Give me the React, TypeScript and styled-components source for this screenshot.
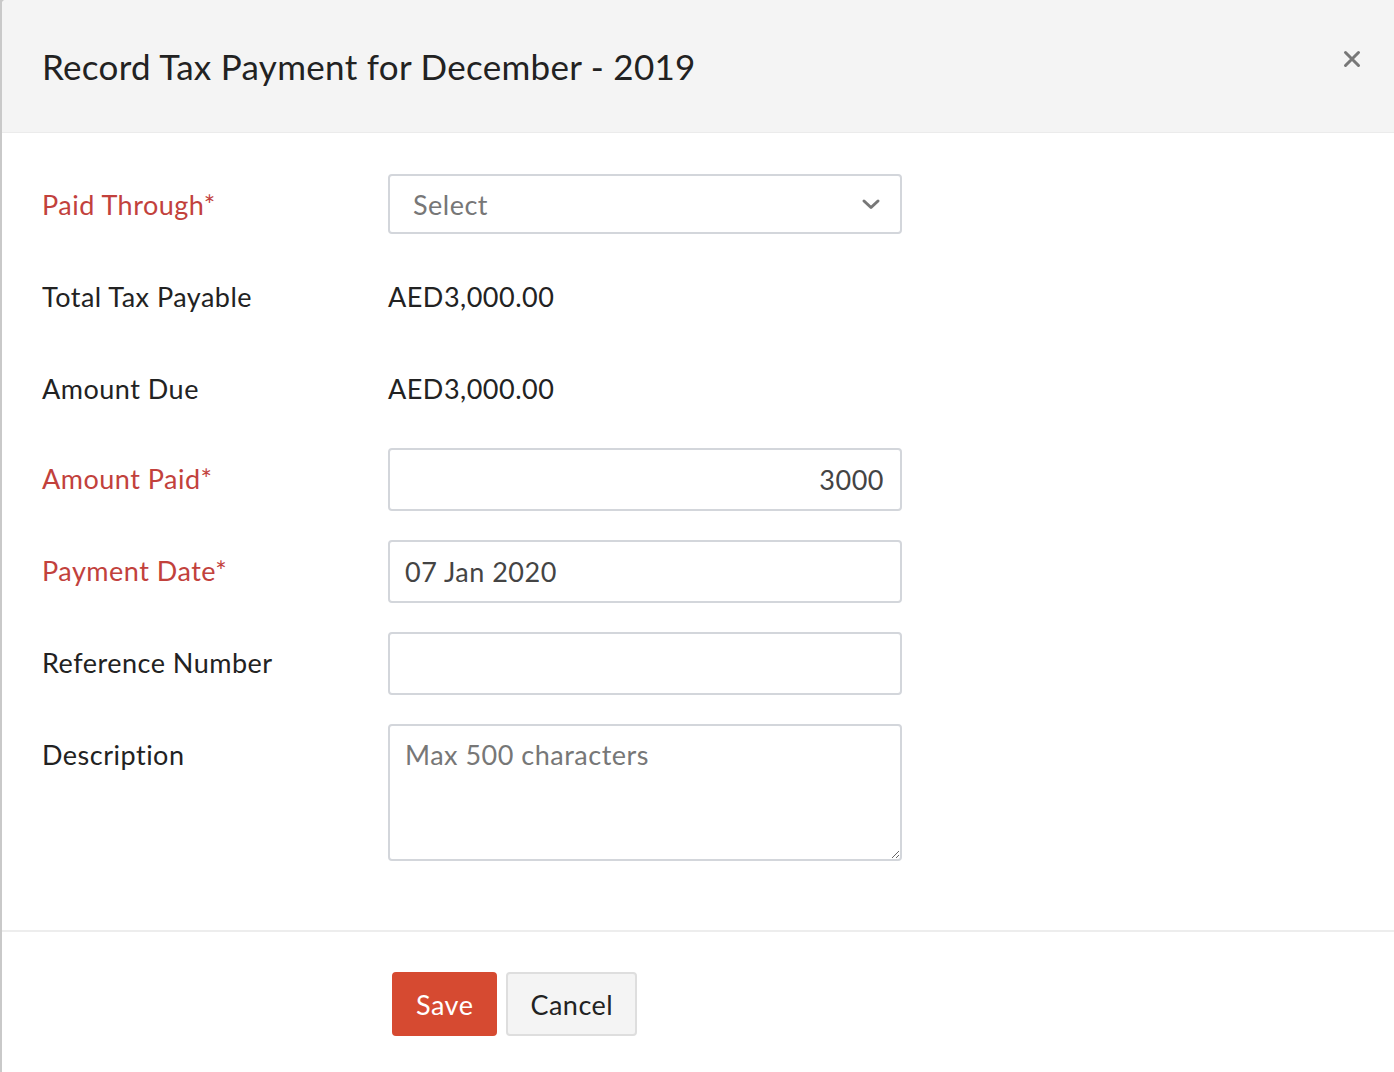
import React from 'react';
import styled, { createGlobalStyle } from 'styled-components';

const GlobalStyle = createGlobalStyle`
  html, body {
    margin: 0;
    padding: 0;
    background: #c9c9c9;
  }
  body {
    font-family: Lato, 'Noto Sans', 'Liberation Sans', sans-serif;
    color: #222;
  }
`;

const SModal = styled.div`
  margin-left: 2px;
  min-height: 1072px;
  background: #fff;
  border-top-left-radius: 4px;
  overflow: hidden;
`;

const SHeader = styled.div`
  height: 132px;
  display: flex;
  align-items: center;
  justify-content: space-between;
  padding: 0 30px 0 40px;
  background: #f4f4f4;
  border-bottom: 1px solid #ebebeb;
`;

const STitle = styled.h1`
  margin: 0;
  font-size: 35px;
  font-weight: 400;
  color: #222;
  letter-spacing: 0.3px;
`;

const SClose = styled.button`
  border: none;
  background: none;
  padding: 0;
  width: 24px;
  height: 24px;
  margin-top: -14px;
  display: flex;
  align-items: center;
  justify-content: center;
  color: #777;
  cursor: pointer;
`;

const SBody = styled.div`
  padding: 41px 40px 69px;
  border-bottom: 2px solid #ededed;
`;

const SForm = styled.div`
  display: grid;
  grid-template-columns: 346px 514px;
  grid-template-rows: 92px 92px 90px 92px 92px 92px auto;
  align-items: start;
  font-size: 27px;
  letter-spacing: 0.5px;
`;

const SLabel = styled.div<{ $required?: boolean }>`
  line-height: 61px;
  color: ${({ $required }) => ($required ? '#c2413c' : '#222')};
`;

const SValue = styled.div`
  line-height: 61px;
  color: #222;
`;

const SSelect = styled.div`
  box-sizing: border-box;
  height: 60px;
  border: 2px solid #d3d6db;
  border-radius: 4px;
  display: flex;
  align-items: center;
  justify-content: space-between;
  padding: 0 19px 0 23px;
  color: #777;
`;

const SInput = styled.input<{ $align?: 'left' | 'right' }>`
  box-sizing: border-box;
  width: 100%;
  height: 63px;
  border: 2px solid #d3d6db;
  border-radius: 4px;
  padding: 0 16px 0 15px;
  font-family: inherit;
  font-size: inherit;
  letter-spacing: inherit;
  color: #444;
  text-align: ${({ $align }) => $align || 'left'};
  outline: none;
  &::placeholder {
    color: #777;
  }
`;

const STextArea = styled.textarea`
  box-sizing: border-box;
  display: block;
  width: 100%;
  height: 137px;
  border: 2px solid #d3d6db;
  border-radius: 4px;
  padding: 14px 15px;
  font-family: inherit;
  font-size: inherit;
  letter-spacing: inherit;
  line-height: 30px;
  color: #444;
  resize: vertical;
  outline: none;
  &::placeholder {
    color: #777;
  }
`;

const SFooter = styled.div`
  display: flex;
  gap: 9px;
  padding: 40px 0 0 390px;
`;

const SButton = styled.button<{ $primary?: boolean }>`
  box-sizing: border-box;
  height: 64px;
  padding: 0 22px;
  border-radius: 4px;
  font-family: inherit;
  font-size: 27px;
  letter-spacing: 0.5px;
  cursor: pointer;
  border: 2px solid ${({ $primary }) => ($primary ? '#d64a31' : '#dedede')};
  background: ${({ $primary }) => ($primary ? '#d64a31' : '#f4f4f4')};
  color: ${({ $primary }) => ($primary ? '#fff' : '#222')};
`;

const ChevronDown = () => (
  <svg width="20" height="12" viewBox="0 0 20 12" fill="none">
    <path d="M3 3l7 6.5L17 3" stroke="#777" strokeWidth="3" strokeLinecap="round" strokeLinejoin="round" />
  </svg>
);

const CloseIcon = () => (
  <svg width="18" height="18" viewBox="0 0 18 18" fill="none">
    <path d="M2.5 2.5l13 13M15.5 2.5l-13 13" stroke="#777" strokeWidth="3" strokeLinecap="round" />
  </svg>
);

export default function App() {
  return (
    <>
      <GlobalStyle />
      <SModal>
        <SHeader>
          <STitle>Record Tax Payment for December - 2019</STitle>
          <SClose aria-label="Close">
            <CloseIcon />
          </SClose>
        </SHeader>
        <SBody>
          <SForm>
            <SLabel $required>Paid Through*</SLabel>
            <SSelect>
              <span>Select</span>
              <ChevronDown />
            </SSelect>

            <SLabel>Total Tax Payable</SLabel>
            <SValue>AED3,000.00</SValue>

            <SLabel>Amount Due</SLabel>
            <SValue>AED3,000.00</SValue>

            <SLabel $required>Amount Paid*</SLabel>
            <SInput $align="right" defaultValue="3000" />

            <SLabel $required>Payment Date*</SLabel>
            <SInput defaultValue="07 Jan 2020" />

            <SLabel>Reference Number</SLabel>
            <SInput />

            <SLabel>Description</SLabel>
            <STextArea placeholder="Max 500 characters" />
          </SForm>
        </SBody>
        <SFooter>
          <SButton $primary>Save</SButton>
          <SButton>Cancel</SButton>
        </SFooter>
      </SModal>
    </>
  );
}
